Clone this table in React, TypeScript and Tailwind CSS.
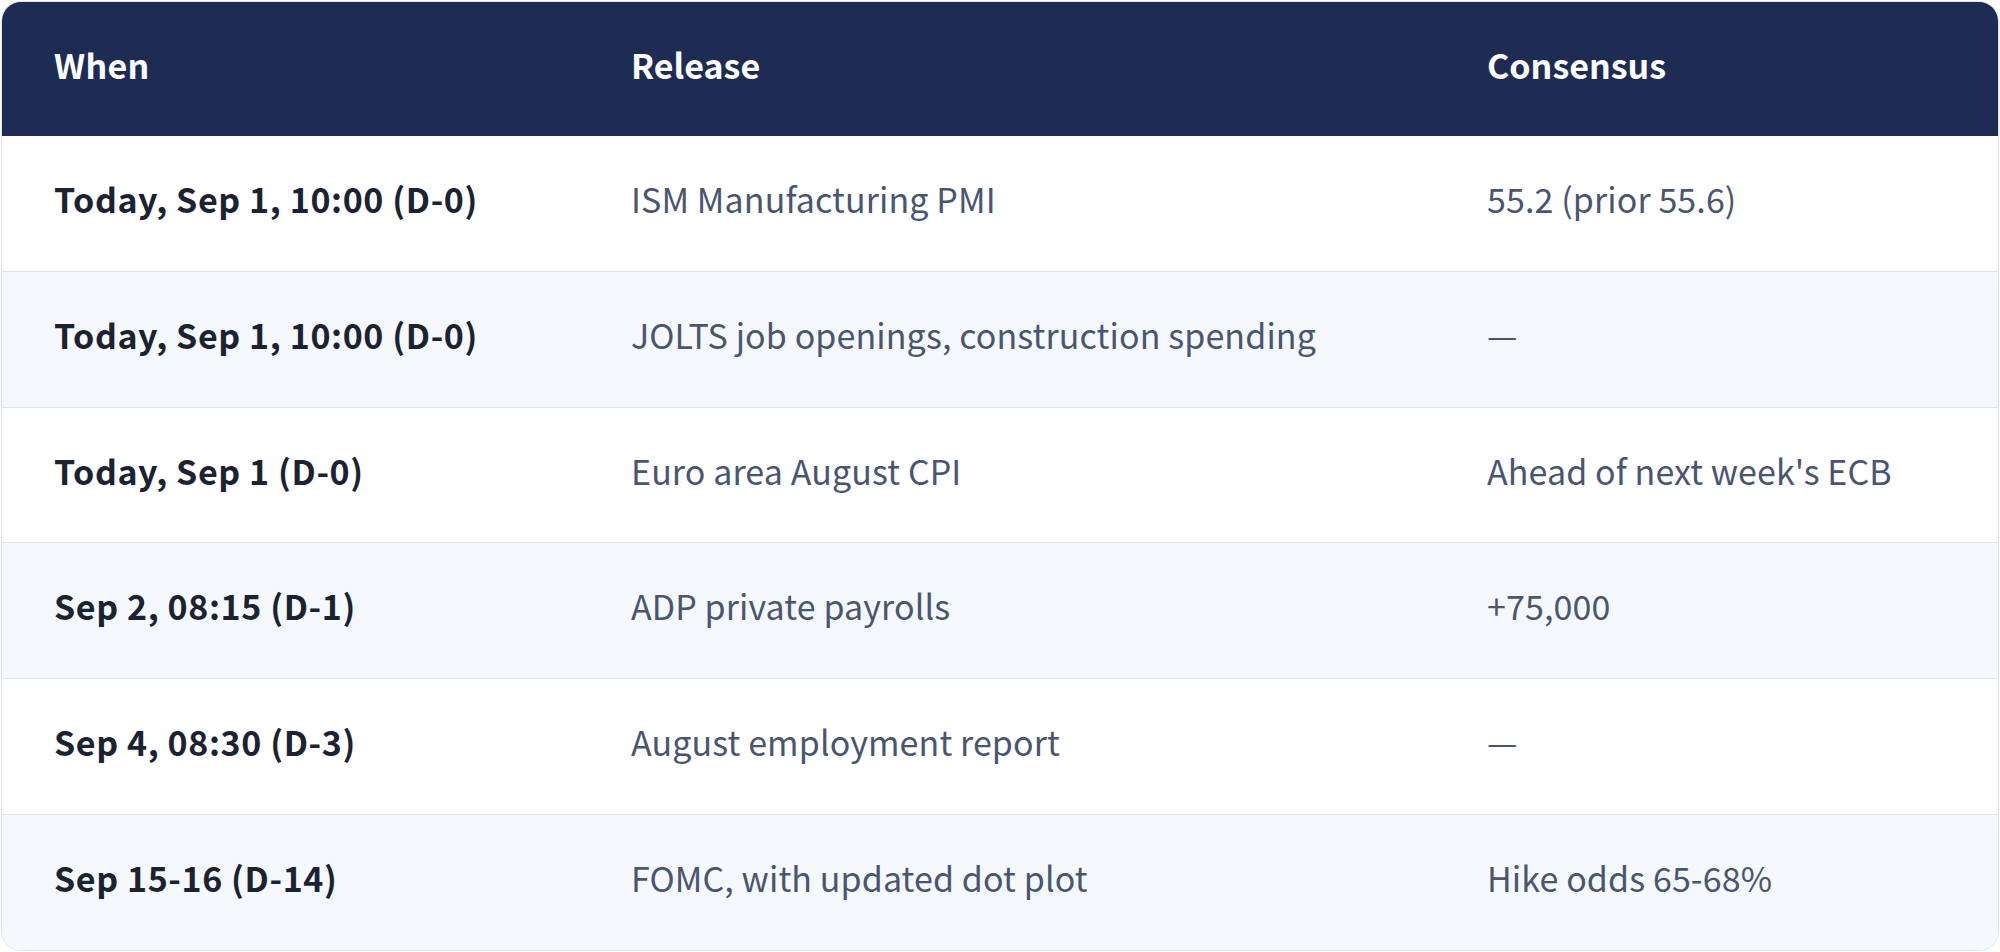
import React from "react";

const rows = [
  ["Today, Sep 1, 10:00 (D-0)", "ISM Manufacturing PMI", "55.2 (prior 55.6)"],
  ["Today, Sep 1, 10:00 (D-0)", "JOLTS job openings, construction spending", "—"],
  ["Today, Sep 1 (D-0)", "Euro area August CPI", "Ahead of next week's ECB"],
  ["Sep 2, 08:15 (D-1)", "ADP private payrolls", "+75,000"],
  ["Sep 4, 08:30 (D-3)", "August employment report", "—"],
  ["Sep 15-16 (D-14)", "FOMC, with updated dot plot", "Hike odds 65-68%"],
];

export default function App() {
  return (
    <div
      className="w-[2000px] h-[952px] bg-white p-px"
      style={{ fontFamily: '"Noto Sans CJK KR", "Noto Sans", sans-serif' }}
    >
      <div className="h-full flex flex-col border border-[#dde4f0] rounded-[20px] overflow-hidden">
        <div className="h-[134px] shrink-0 bg-[#1e2c54] flex items-center pb-[10px] text-white font-bold text-[34px]">
          <div className="w-[577px] pl-[52px] tracking-[0.3px]">When</div>
          <div className="w-[856px] pl-[52px]">Release</div>
          <div className="flex-1 pl-[52px]">Consensus</div>
        </div>
        {rows.map((r, i) => (
          <div
            key={i}
            className={
              "flex-1 flex items-center pb-[10px] text-[34px] " +
              (i > 0 ? "border-t border-[#dde4f0] " : "") +
              (i % 2 === 1 ? "bg-[#f5f8fd]" : "bg-white")
            }
          >
            <div className="w-[577px] pl-[52px] font-bold tracking-[0.6px] text-[#1b2232]">{r[0]}</div>
            <div className="w-[856px] pl-[52px] tracking-[0.1px] text-[#4a5572]">{r[1]}</div>
            <div className="flex-1 pl-[52px] tracking-[0.1px] text-[#4a5572]">{r[2]}</div>
          </div>
        ))}
      </div>
    </div>
  );
}
